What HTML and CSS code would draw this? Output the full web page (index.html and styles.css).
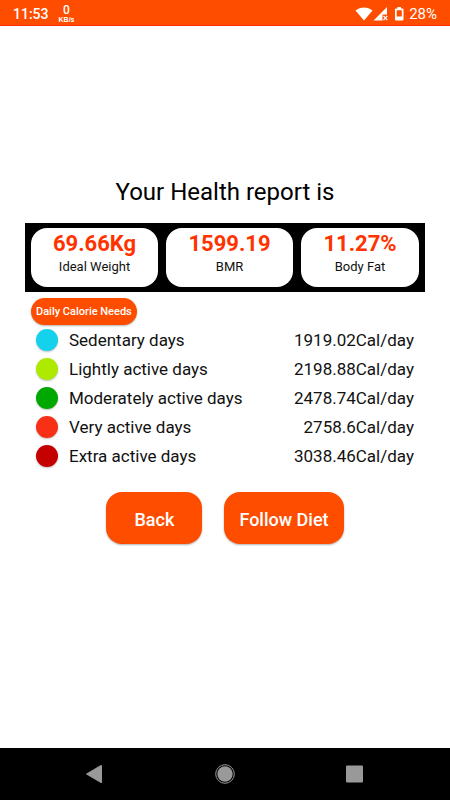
FILE: index.html
```html
<!DOCTYPE html>
<html lang="en">
<head>
<meta charset="utf-8">
<meta name="viewport" content="width=device-width, initial-scale=1">
<title>Health report</title>
<link rel="stylesheet" href="styles.css">
</head>
<body>
<header class="status">
  <span class="clock">11:53</span>
  <span class="speed"><b class="speed-value">0</b><span class="speed-unit">KB/s</span></span>
  <span class="status-right">
    <svg class="signals" width="50" height="16" viewBox="0 0 50 16" aria-hidden="true">
      <path fill="#fff" d="M.5 4.400C5.300.4 12.700.4 17.500 4.400L9 14.500Z"/>
      <path fill="#fff" d="M32 1V8.500H27.500V14.500H18.500Z"/>
      <path stroke="#fff" stroke-width="1.300" d="M28.500 9.800l3.800 4.400M32.300 9.800l-3.800 4.400"/>
      <path fill="#fff" fill-rule="evenodd" d="M42.500 1h3.500v1.400h1.500q1 0 1 1v10.200q0 1-1 1h-6.500q-1 0-1-1V3.400q0-1 1-1h1.500ZM41.700 4.200V10.500h5.100V4.200Z"/>
    </svg>
    <span class="battery">28%</span>
  </span>
</header>
<main class="report">
  <h1 class="title">Your Health report is</h1>
  <section class="stats">
    <div class="stat"><strong class="stat-value">69.66Kg</strong><span class="stat-label">Ideal Weight</span></div>
    <div class="stat"><strong class="stat-value">1599.19</strong><span class="stat-label">BMR</span></div>
    <div class="stat"><strong class="stat-value">11.27%</strong><span class="stat-label">Body Fat</span></div>
  </section>
  <section class="needs">
    <button class="chip" type="button">Daily Calorie Needs</button>
    <ul class="list">
      <li class="row"><span class="dot cyan"></span><span>Sedentary days</span><span class="amount">1919.02Cal/day</span></li>
      <li class="row"><span class="dot lime"></span><span>Lightly active days</span><span class="amount">2198.88Cal/day</span></li>
      <li class="row"><span class="dot green"></span><span>Moderately active days</span><span class="amount">2478.74Cal/day</span></li>
      <li class="row"><span class="dot red"></span><span>Very active days</span><span class="amount">2758.6Cal/day</span></li>
      <li class="row"><span class="dot maroon"></span><span>Extra active days</span><span class="amount">3038.46Cal/day</span></li>
    </ul>
  </section>
  <div class="actions">
    <button class="action" type="button">Back</button>
    <button class="action" type="button">Follow Diet</button>
  </div>
</main>
<nav class="system">
  <button class="key" type="button" aria-label="Back"><svg width="20" height="20" viewBox="0 0 20 20"><path fill="#999" d="M15.500 1.200Q17 .4 17 1.600V18.400Q17 19.600 15.500 18.800L1.500 10.500Q.7 10 1.500 9.500Z"/></svg></button>
  <button class="key" type="button" aria-label="Home"><svg width="20" height="20" viewBox="0 0 20 20"><circle cx="10" cy="10" r="7.700" fill="#999"/><circle cx="10" cy="10" r="9.300" fill="none" stroke="#999"/></svg></button>
  <button class="key" type="button" aria-label="Recent apps"><svg width="20" height="20" viewBox="0 0 20 20"><rect x="1" y="1.500" width="17" height="17" rx="1" fill="#999"/></svg></button>
</nav>
</body>
</html>
```
FILE: styles.css
```css
* { box-sizing: border-box; }

body {
  margin: 0;
  min-height: 100vh;
  display: flex;
  flex-direction: column;
  background: #fff;
  color: #111;
  font-family: Roboto, "Liberation Sans", sans-serif;
}

button {
  border: 0;
  padding: 0;
  font: inherit;
  color: #fff;
  background: #ff4d00;
}

.status {
  height: 26px;
  padding: 2px 13px 0;
  display: flex;
  align-items: center;
  background: #ff4d00;
  border-bottom: 1px solid #ff2a00;
  color: #fff;
}

.clock { font-size: 14px; font-weight: 500; }

.speed {
  margin-left: 10px;
  display: flex;
  flex-direction: column;
  align-items: center;
}

.speed-value { font-size: 12px; line-height: 11px; font-weight: 500; }
.speed-unit { font-family: "Liberation Sans", sans-serif; font-size: 7px; line-height: 7px; font-weight: 700; }

.status-right {
  margin-left: auto;
  display: flex;
  align-items: center;
  gap: 4px;
}

.signals { display: block; }
.battery { font-size: 15px; }

.report {
  flex: 1;
  padding: 152px 25px 0;
}

.title {
  margin: 0 0 17px;
  font-size: 24px;
  line-height: 28px;
  font-weight: 400;
  text-align: center;
  color: #000;
}

.stats {
  display: grid;
  grid-template-columns: 14fr 14fr 13fr;
  gap: 8px;
  padding: 5px 6px;
  background: #000;
}

.stat {
  display: flex;
  flex-direction: column;
  align-items: center;
  padding: 4px 0 9px;
  border-radius: 16px;
  background: #fff;
}

.stat-value {
  font-size: 22px;
  line-height: 24px;
  font-weight: 700;
  color: #ff3300;
}

.stat-label { font-size: 13px; line-height: 22px; }

.needs { padding: 6px 11px 0 6px; }

.chip {
  display: block;
  height: 27px;
  padding: 0 5px;
  border-radius: 14px;
  font-size: 11px;
  font-weight: 500;
  box-shadow: 0 1px 2px rgba(0, 0, 0, 0.3);
}

.list {
  margin: 0;
  padding: 0 0 0 5px;
  list-style: none;
}

.row {
  display: flex;
  align-items: center;
  height: 29px;
  font-size: 17px;
}

.dot {
  width: 22px;
  height: 22px;
  margin-right: 11px;
  border-radius: 50%;
  box-shadow: 0 1px 2px rgba(0, 0, 0, 0.25);
}

.cyan { background: #14d2ec; }
.lime { background: #aeea00; }
.green { background: #00a800; }
.red { background: #f83015; }
.maroon { background: #c40000; }

.amount { margin-left: auto; }

.actions {
  display: flex;
  justify-content: center;
  gap: 22px;
  padding-top: 22px;
}

.action {
  height: 52px;
  min-width: 96px;
  padding: 2px 15px 0;
  border-radius: 16px;
  font-size: 18px;
  font-weight: 500;
  box-shadow: 0 1px 2px rgba(0, 0, 0, 0.3);
}

.system {
  height: 52px;
  display: flex;
  justify-content: center;
  align-items: center;
  gap: 110px;
  background: #000;
}

.key {
  display: block;
  width: 20px;
  height: 20px;
  background: none;
}

.key svg { display: block; }
```
